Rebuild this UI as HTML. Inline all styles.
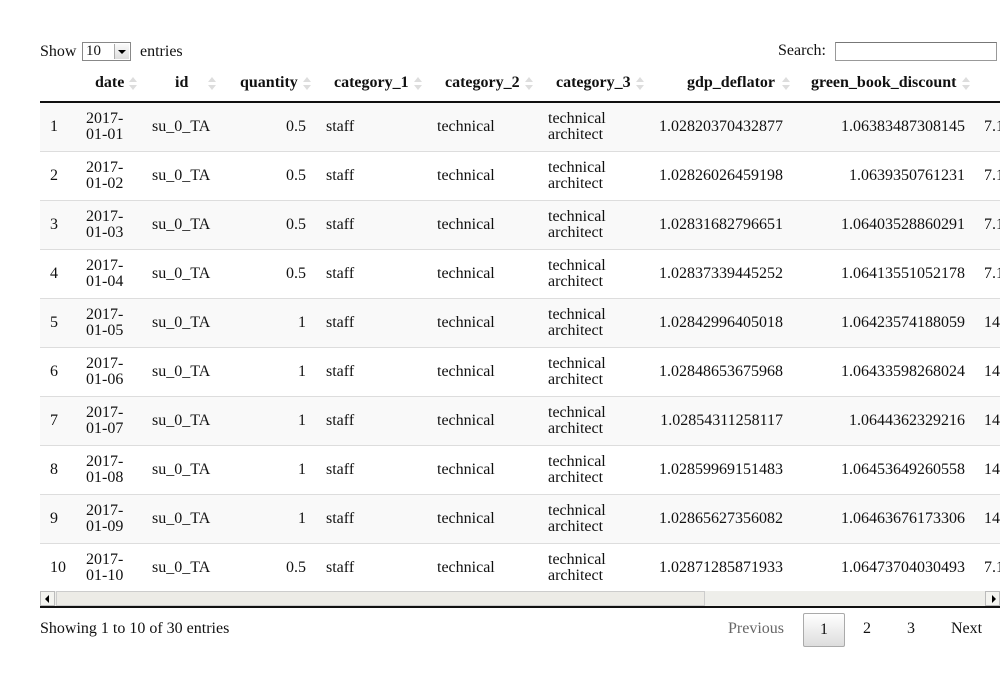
<!DOCTYPE html>
<html><head><meta charset="utf-8"><style>
body{margin:0;width:1000px;height:683px;overflow:hidden;background:#fff;font-family:"Liberation Serif",serif;font-size:16px;color:#111;position:relative}
.a{position:absolute;white-space:nowrap}
.r{position:absolute;left:40px;width:960px;height:48px;border-bottom:1px solid #ddd}
.s{background:#f9f9f9}
.c{position:absolute;top:0;height:48px;display:flex;align-items:center;line-height:16px;white-space:nowrap}
.rt{justify-content:flex-end}
.h{position:absolute;top:74px;font-weight:bold;white-space:nowrap}
.ar{position:absolute;top:77px;width:8px;height:14px}
.ar:before{content:"";position:absolute;left:0;top:0;border:4px solid transparent;border-bottom:5px solid #ddd;border-top:0}
.ar:after{content:"";position:absolute;left:0;top:8px;border:4px solid transparent;border-top:5px solid #ddd;border-bottom:0}
</style></head><body>
<div class="a" style="left:40px;top:43px">Show</div>
<div class="a" style="left:82px;top:42px;width:49px;height:19px;border:1px solid #888;background:#fff;box-sizing:border-box;font-size:15px;line-height:17px;padding-left:3px">10<div style="position:absolute;right:1px;top:1px;width:15px;height:15px;background:linear-gradient(#fafafa,#ddd);border-left:1px solid #aaa;box-sizing:border-box"><div style="position:absolute;left:3px;top:6px;border:4px solid transparent;border-top:4px solid #000;border-bottom:0"></div></div></div>
<div class="a" style="left:140px;top:43px">entries</div>
<div class="a" style="left:778px;top:42px">Search:</div>
<div class="a" style="left:835px;top:42px;width:162px;height:19px;border:1px solid #999;border-top-color:#777;box-sizing:border-box"></div>

<div class="h" style="left:95px">date</div><div class="ar" style="left:129px"></div>
<div class="h" style="left:175px">id</div><div class="ar" style="left:208px"></div>
<div class="h" style="left:240px">quantity</div><div class="ar" style="left:303px"></div>
<div class="h" style="left:334px">category_1</div><div class="ar" style="left:414px"></div>
<div class="h" style="left:445px">category_2</div><div class="ar" style="left:525px"></div>
<div class="h" style="left:556px">category_3</div><div class="ar" style="left:636px"></div>
<div class="h" style="left:687px">gdp_deflator</div><div class="ar" style="left:782px"></div>
<div class="h" style="left:811px">green_book_discount</div><div class="ar" style="left:962px"></div>
<div class="a" style="left:40px;top:101px;width:960px;height:2px;background:#111"></div>

<div class="r s" style="top:103px"><div class="c" style="left:10px">1</div><div class="c" style="left:46px">2017-<br>01-01</div><div class="c" style="left:112px">su_0_TA</div><div class="c rt" style="left:200px;width:66px">0.5</div><div class="c" style="left:286px">staff</div><div class="c" style="left:397px">technical</div><div class="c" style="left:508px">technical<br>architect</div><div class="c rt" style="left:600px;width:143px">1.02820370432877</div><div class="c rt" style="left:780px;width:145px">1.06383487308145</div><div class="c" style="left:944px">7.1</div></div>
<div class="r" style="top:152px"><div class="c" style="left:10px">2</div><div class="c" style="left:46px">2017-<br>01-02</div><div class="c" style="left:112px">su_0_TA</div><div class="c rt" style="left:200px;width:66px">0.5</div><div class="c" style="left:286px">staff</div><div class="c" style="left:397px">technical</div><div class="c" style="left:508px">technical<br>architect</div><div class="c rt" style="left:600px;width:143px">1.02826026459198</div><div class="c rt" style="left:780px;width:145px">1.0639350761231</div><div class="c" style="left:944px">7.1</div></div>
<div class="r s" style="top:201px"><div class="c" style="left:10px">3</div><div class="c" style="left:46px">2017-<br>01-03</div><div class="c" style="left:112px">su_0_TA</div><div class="c rt" style="left:200px;width:66px">0.5</div><div class="c" style="left:286px">staff</div><div class="c" style="left:397px">technical</div><div class="c" style="left:508px">technical<br>architect</div><div class="c rt" style="left:600px;width:143px">1.02831682796651</div><div class="c rt" style="left:780px;width:145px">1.06403528860291</div><div class="c" style="left:944px">7.1</div></div>
<div class="r" style="top:250px"><div class="c" style="left:10px">4</div><div class="c" style="left:46px">2017-<br>01-04</div><div class="c" style="left:112px">su_0_TA</div><div class="c rt" style="left:200px;width:66px">0.5</div><div class="c" style="left:286px">staff</div><div class="c" style="left:397px">technical</div><div class="c" style="left:508px">technical<br>architect</div><div class="c rt" style="left:600px;width:143px">1.02837339445252</div><div class="c rt" style="left:780px;width:145px">1.06413551052178</div><div class="c" style="left:944px">7.1</div></div>
<div class="r s" style="top:299px"><div class="c" style="left:10px">5</div><div class="c" style="left:46px">2017-<br>01-05</div><div class="c" style="left:112px">su_0_TA</div><div class="c rt" style="left:200px;width:66px">1</div><div class="c" style="left:286px">staff</div><div class="c" style="left:397px">technical</div><div class="c" style="left:508px">technical<br>architect</div><div class="c rt" style="left:600px;width:143px">1.02842996405018</div><div class="c rt" style="left:780px;width:145px">1.06423574188059</div><div class="c" style="left:944px">14</div></div>
<div class="r" style="top:348px"><div class="c" style="left:10px">6</div><div class="c" style="left:46px">2017-<br>01-06</div><div class="c" style="left:112px">su_0_TA</div><div class="c rt" style="left:200px;width:66px">1</div><div class="c" style="left:286px">staff</div><div class="c" style="left:397px">technical</div><div class="c" style="left:508px">technical<br>architect</div><div class="c rt" style="left:600px;width:143px">1.02848653675968</div><div class="c rt" style="left:780px;width:145px">1.06433598268024</div><div class="c" style="left:944px">14</div></div>
<div class="r s" style="top:397px"><div class="c" style="left:10px">7</div><div class="c" style="left:46px">2017-<br>01-07</div><div class="c" style="left:112px">su_0_TA</div><div class="c rt" style="left:200px;width:66px">1</div><div class="c" style="left:286px">staff</div><div class="c" style="left:397px">technical</div><div class="c" style="left:508px">technical<br>architect</div><div class="c rt" style="left:600px;width:143px">1.02854311258117</div><div class="c rt" style="left:780px;width:145px">1.0644362329216</div><div class="c" style="left:944px">14</div></div>
<div class="r" style="top:446px"><div class="c" style="left:10px">8</div><div class="c" style="left:46px">2017-<br>01-08</div><div class="c" style="left:112px">su_0_TA</div><div class="c rt" style="left:200px;width:66px">1</div><div class="c" style="left:286px">staff</div><div class="c" style="left:397px">technical</div><div class="c" style="left:508px">technical<br>architect</div><div class="c rt" style="left:600px;width:143px">1.02859969151483</div><div class="c rt" style="left:780px;width:145px">1.06453649260558</div><div class="c" style="left:944px">14</div></div>
<div class="r s" style="top:495px"><div class="c" style="left:10px">9</div><div class="c" style="left:46px">2017-<br>01-09</div><div class="c" style="left:112px">su_0_TA</div><div class="c rt" style="left:200px;width:66px">1</div><div class="c" style="left:286px">staff</div><div class="c" style="left:397px">technical</div><div class="c" style="left:508px">technical<br>architect</div><div class="c rt" style="left:600px;width:143px">1.02865627356082</div><div class="c rt" style="left:780px;width:145px">1.06463676173306</div><div class="c" style="left:944px">14</div></div>
<div class="r" style="top:544px;border-bottom:none"><div class="c" style="left:10px">10</div><div class="c" style="left:46px">2017-<br>01-10</div><div class="c" style="left:112px">su_0_TA</div><div class="c rt" style="left:200px;width:66px">0.5</div><div class="c" style="left:286px">staff</div><div class="c" style="left:397px">technical</div><div class="c" style="left:508px">technical<br>architect</div><div class="c rt" style="left:600px;width:143px">1.02871285871933</div><div class="c rt" style="left:780px;width:145px">1.06473704030493</div><div class="c" style="left:944px">7.1</div></div>

<div class="a" style="left:40px;top:591px;width:960px;height:16px;background:#eeeeea"></div>
<div class="a" style="left:40px;top:591px;width:15px;height:15px;background:#f4f4f0;border:1px solid #bbb;box-sizing:border-box"><div style="position:absolute;left:4px;top:3px;border:4px solid transparent;border-right:4px solid #000;border-left:0"></div></div>
<div class="a" style="left:56px;top:591px;width:649px;height:15px;background:#ecebe6;border:1px solid #ccc;box-sizing:border-box"></div>
<div class="a" style="left:985px;top:591px;width:15px;height:15px;background:#f4f4f0;border:1px solid #bbb;box-sizing:border-box"><div style="position:absolute;left:6px;top:3px;border:4px solid transparent;border-left:4px solid #000;border-right:0"></div></div>
<div class="a" style="left:40px;top:606px;width:960px;height:2px;background:#111"></div>

<div class="a" style="left:40px;top:620px">Showing 1 to 10 of 30 entries</div>
<div class="a" style="left:728px;top:620px;color:#666">Previous</div>
<div class="a" style="left:803px;top:613px;width:42px;height:34px;box-sizing:border-box;border:1px solid #aaa;border-radius:2px;background:linear-gradient(#fff,#ddd);text-align:center;line-height:32px">1</div>
<div class="a" style="left:863px;top:620px">2</div>
<div class="a" style="left:907px;top:620px">3</div>
<div class="a" style="left:951px;top:620px">Next</div>
</body></html>
